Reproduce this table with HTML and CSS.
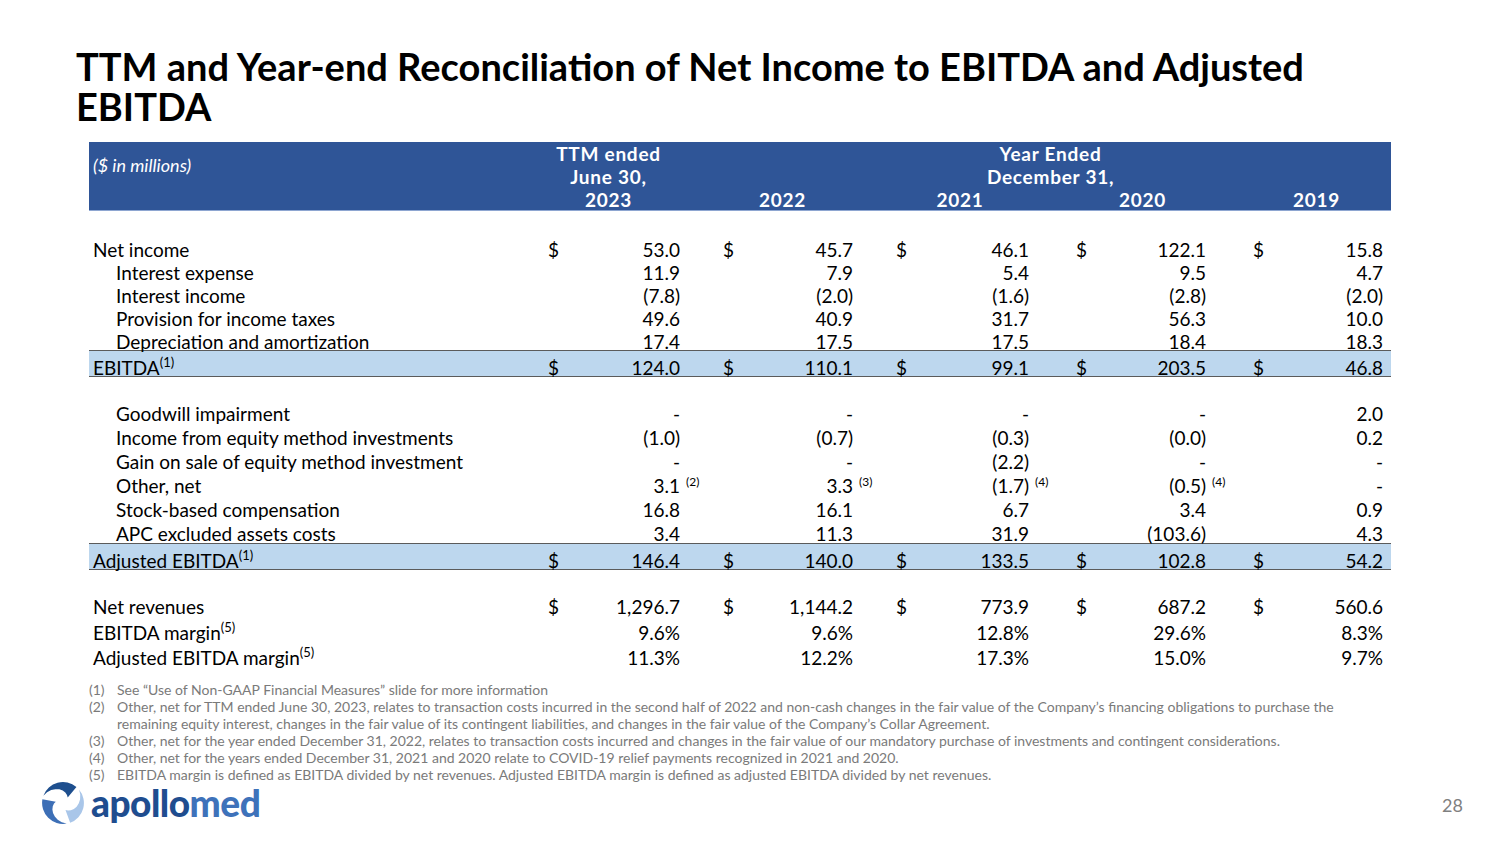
FILE: index.html
```html
<!DOCTYPE html>
<html lang="en">
<head>
<meta charset="utf-8">
<title>TTM and Year-end Reconciliation</title>
<link rel="stylesheet" href="styles.css">
</head>
<body>
<div class="slide">
  <h1 class="title">TTM and Year-end Reconciliation of Net Income to EBITDA and Adjusted EBITDA</h1>

  <div class="table">
    <div class="thead">
      <div class="units">($ in millions)</div>
      <div class="h-ttm">TTM ended<br>June 30,</div>
      <div class="h-ye">Year Ended<br>December 31,</div>
      <div class="yr y1">2023</div>
      <div class="yr y2">2022</div>
      <div class="yr y3">2021</div>
      <div class="yr y4">2020</div>
      <div class="yr y5">2019</div>
    </div>

    <div class="block top-block">
      <div class="row"><div class="lbl">Net income</div>
        <div class="g"><span class="d">$</span><span class="v">53.0</span><span class="n"></span></div>
        <div class="g"><span class="d">$</span><span class="v">45.7</span><span class="n"></span></div>
        <div class="g"><span class="d">$</span><span class="v">46.1</span><span class="n"></span></div>
        <div class="g"><span class="d">$</span><span class="v">122.1</span><span class="n"></span></div>
        <div class="g"><span class="d">$</span><span class="v">15.8</span><span class="n"></span></div>
      </div>
      <div class="row"><div class="lbl ind">Interest expense</div>
        <div class="g"><span class="d"></span><span class="v">11.9</span><span class="n"></span></div>
        <div class="g"><span class="d"></span><span class="v">7.9</span><span class="n"></span></div>
        <div class="g"><span class="d"></span><span class="v">5.4</span><span class="n"></span></div>
        <div class="g"><span class="d"></span><span class="v">9.5</span><span class="n"></span></div>
        <div class="g"><span class="d"></span><span class="v">4.7</span><span class="n"></span></div>
      </div>
      <div class="row"><div class="lbl ind">Interest income</div>
        <div class="g"><span class="d"></span><span class="v">(7.8)</span><span class="n"></span></div>
        <div class="g"><span class="d"></span><span class="v">(2.0)</span><span class="n"></span></div>
        <div class="g"><span class="d"></span><span class="v">(1.6)</span><span class="n"></span></div>
        <div class="g"><span class="d"></span><span class="v">(2.8)</span><span class="n"></span></div>
        <div class="g"><span class="d"></span><span class="v">(2.0)</span><span class="n"></span></div>
      </div>
      <div class="row"><div class="lbl ind">Provision for income taxes</div>
        <div class="g"><span class="d"></span><span class="v">49.6</span><span class="n"></span></div>
        <div class="g"><span class="d"></span><span class="v">40.9</span><span class="n"></span></div>
        <div class="g"><span class="d"></span><span class="v">31.7</span><span class="n"></span></div>
        <div class="g"><span class="d"></span><span class="v">56.3</span><span class="n"></span></div>
        <div class="g"><span class="d"></span><span class="v">10.0</span><span class="n"></span></div>
      </div>
      <div class="row last"><div class="lbl ind">Depreciation and amortization</div>
        <div class="g"><span class="d"></span><span class="v">17.4</span><span class="n"></span></div>
        <div class="g"><span class="d"></span><span class="v">17.5</span><span class="n"></span></div>
        <div class="g"><span class="d"></span><span class="v">17.5</span><span class="n"></span></div>
        <div class="g"><span class="d"></span><span class="v">18.4</span><span class="n"></span></div>
        <div class="g"><span class="d"></span><span class="v">18.3</span><span class="n"></span></div>
      </div>
      <div class="row total"><div class="lbl">EBITDA<sup>(1)</sup></div>
        <div class="g"><span class="d">$</span><span class="v">124.0</span><span class="n"></span></div>
        <div class="g"><span class="d">$</span><span class="v">110.1</span><span class="n"></span></div>
        <div class="g"><span class="d">$</span><span class="v">99.1</span><span class="n"></span></div>
        <div class="g"><span class="d">$</span><span class="v">203.5</span><span class="n"></span></div>
        <div class="g"><span class="d">$</span><span class="v">46.8</span><span class="n"></span></div>
      </div>
    </div>

    <div class="block mid-block">
      <div class="row"><div class="lbl ind">Goodwill impairment</div>
        <div class="g"><span class="d"></span><span class="v">-</span><span class="n"></span></div>
        <div class="g"><span class="d"></span><span class="v">-</span><span class="n"></span></div>
        <div class="g"><span class="d"></span><span class="v">-</span><span class="n"></span></div>
        <div class="g"><span class="d"></span><span class="v">-</span><span class="n"></span></div>
        <div class="g"><span class="d"></span><span class="v">2.0</span><span class="n"></span></div>
      </div>
      <div class="row"><div class="lbl ind">Income from equity method investments</div>
        <div class="g"><span class="d"></span><span class="v">(1.0)</span><span class="n"></span></div>
        <div class="g"><span class="d"></span><span class="v">(0.7)</span><span class="n"></span></div>
        <div class="g"><span class="d"></span><span class="v">(0.3)</span><span class="n"></span></div>
        <div class="g"><span class="d"></span><span class="v">(0.0)</span><span class="n"></span></div>
        <div class="g"><span class="d"></span><span class="v">0.2</span><span class="n"></span></div>
      </div>
      <div class="row"><div class="lbl ind">Gain on sale of equity method investment</div>
        <div class="g"><span class="d"></span><span class="v">-</span><span class="n"></span></div>
        <div class="g"><span class="d"></span><span class="v">-</span><span class="n"></span></div>
        <div class="g"><span class="d"></span><span class="v">(2.2)</span><span class="n"></span></div>
        <div class="g"><span class="d"></span><span class="v">-</span><span class="n"></span></div>
        <div class="g"><span class="d"></span><span class="v">-</span><span class="n"></span></div>
      </div>
      <div class="row"><div class="lbl ind">Other, net</div>
        <div class="g"><span class="d"></span><span class="v">3.1</span><span class="n">(2)</span></div>
        <div class="g"><span class="d"></span><span class="v">3.3</span><span class="n">(3)</span></div>
        <div class="g"><span class="d"></span><span class="v">(1.7)</span><span class="n">(4)</span></div>
        <div class="g"><span class="d"></span><span class="v">(0.5)</span><span class="n">(4)</span></div>
        <div class="g"><span class="d"></span><span class="v">-</span><span class="n"></span></div>
      </div>
      <div class="row"><div class="lbl ind">Stock-based compensation</div>
        <div class="g"><span class="d"></span><span class="v">16.8</span><span class="n"></span></div>
        <div class="g"><span class="d"></span><span class="v">16.1</span><span class="n"></span></div>
        <div class="g"><span class="d"></span><span class="v">6.7</span><span class="n"></span></div>
        <div class="g"><span class="d"></span><span class="v">3.4</span><span class="n"></span></div>
        <div class="g"><span class="d"></span><span class="v">0.9</span><span class="n"></span></div>
      </div>
      <div class="row last"><div class="lbl ind">APC excluded assets costs</div>
        <div class="g"><span class="d"></span><span class="v">3.4</span><span class="n"></span></div>
        <div class="g"><span class="d"></span><span class="v">11.3</span><span class="n"></span></div>
        <div class="g"><span class="d"></span><span class="v">31.9</span><span class="n"></span></div>
        <div class="g"><span class="d"></span><span class="v">(103.6)</span><span class="n"></span></div>
        <div class="g"><span class="d"></span><span class="v">4.3</span><span class="n"></span></div>
      </div>
      <div class="row total"><div class="lbl">Adjusted EBITDA<sup>(1)</sup></div>
        <div class="g"><span class="d">$</span><span class="v">146.4</span><span class="n"></span></div>
        <div class="g"><span class="d">$</span><span class="v">140.0</span><span class="n"></span></div>
        <div class="g"><span class="d">$</span><span class="v">133.5</span><span class="n"></span></div>
        <div class="g"><span class="d">$</span><span class="v">102.8</span><span class="n"></span></div>
        <div class="g"><span class="d">$</span><span class="v">54.2</span><span class="n"></span></div>
      </div>
    </div>

    <div class="block bottom-block">
      <div class="row wide"><div class="lbl">Net revenues</div>
        <div class="g"><span class="d">$</span><span class="v">1,296.7</span><span class="n"></span></div>
        <div class="g"><span class="d">$</span><span class="v">1,144.2</span><span class="n"></span></div>
        <div class="g"><span class="d">$</span><span class="v">773.9</span><span class="n"></span></div>
        <div class="g"><span class="d">$</span><span class="v">687.2</span><span class="n"></span></div>
        <div class="g"><span class="d">$</span><span class="v">560.6</span><span class="n"></span></div>
      </div>
      <div class="row wide"><div class="lbl">EBITDA margin<sup>(5)</sup></div>
        <div class="g"><span class="d"></span><span class="v">9.6%</span><span class="n"></span></div>
        <div class="g"><span class="d"></span><span class="v">9.6%</span><span class="n"></span></div>
        <div class="g"><span class="d"></span><span class="v">12.8%</span><span class="n"></span></div>
        <div class="g"><span class="d"></span><span class="v">29.6%</span><span class="n"></span></div>
        <div class="g"><span class="d"></span><span class="v">8.3%</span><span class="n"></span></div>
      </div>
      <div class="row wide"><div class="lbl">Adjusted EBITDA margin<sup>(5)</sup></div>
        <div class="g"><span class="d"></span><span class="v">11.3%</span><span class="n"></span></div>
        <div class="g"><span class="d"></span><span class="v">12.2%</span><span class="n"></span></div>
        <div class="g"><span class="d"></span><span class="v">17.3%</span><span class="n"></span></div>
        <div class="g"><span class="d"></span><span class="v">15.0%</span><span class="n"></span></div>
        <div class="g"><span class="d"></span><span class="v">9.7%</span><span class="n"></span></div>
      </div>
    </div>
  </div>

  <ol class="notes">
    <li><span class="num">(1)</span><span class="txt">See “Use of Non-GAAP Financial Measures” slide for more information</span></li>
    <li><span class="num">(2)</span><span class="txt">Other, net for TTM ended June 30, 2023, relates to transaction costs incurred in the second half of 2022 and non-cash changes in the fair value of the Company’s financing obligations to purchase the remaining equity interest, changes in the fair value of its contingent liabilities, and changes in the fair value of the Company’s Collar Agreement.</span></li>
    <li><span class="num">(3)</span><span class="txt">Other, net for the year ended December 31, 2022, relates to transaction costs incurred and changes in the fair value of our mandatory purchase of investments and contingent considerations.</span></li>
    <li><span class="num">(4)</span><span class="txt">Other, net for the years ended December 31, 2021 and 2020 relate to COVID-19 relief payments recognized in 2021 and 2020.</span></li>
    <li><span class="num">(5)</span><span class="txt">EBITDA margin is defined as EBITDA divided by net revenues. Adjusted EBITDA margin is defined as adjusted EBITDA divided by net revenues.</span></li>
  </ol>

  <div class="footer">
    <div class="logo">
      <svg class="logo-mark" width="46" height="46" viewBox="0 0 44 44" aria-hidden="true">
        <g transform="translate(22 22)">
          <path fill="#3d6fb6" transform="rotate(-120)" d="M-18.79 -6.84 A20 20 0 0 1 12.86 -15.32 L4.50 -5.36 L3.81 -7.74 L2.22 -10.01 L-0.26 -11.87 L-3.49 -13.04 L-7.28 -13.26 L-11.32 -12.35 L-15.28 -10.21 Z"/>
          <path fill="#a9c6e9" transform="rotate(120)" d="M-18.79 -6.84 A20 20 0 0 1 12.86 -15.32 L4.50 -5.36 L3.81 -7.74 L2.22 -10.01 L-0.26 -11.87 L-3.49 -13.04 L-7.28 -13.26 L-11.32 -12.35 L-15.28 -10.21 Z"/>
          <path fill="#1e4f8e" d="M-18.79 -6.84 A20 20 0 0 1 12.86 -15.32 L4.50 -5.36 L3.81 -7.74 L2.22 -10.01 L-0.26 -11.87 L-3.49 -13.04 L-7.28 -13.26 L-11.32 -12.35 L-15.28 -10.21 Z"/>
        </g>
      </svg>
      <span class="logo-text"><span class="apollo">apollo</span><span class="med">med</span></span>
    </div>
    <div class="page">28</div>
  </div>
</div>
</body>
</html>
```

FILE: styles.css
```css
* { box-sizing: border-box; }

html, body {
  margin: 0;
  padding: 0;
  background: #ffffff;
}

body {
  font-family: Lato, "Liberation Sans", sans-serif;
  color: #000000;
}

.slide {
  width: 1500px;
  height: 844px;
  padding: 46px 0 0 0;
  overflow: hidden;
}

.title {
  margin: 0 0 16px 76px;
  width: 1280px;
  font-size: 38px;
  line-height: 40px;
  font-weight: 700;
  color: #000;
}

.table {
  margin-left: 89px;
  width: 1302px;
}

/* header */
.thead {
  display: grid;
  grid-template-columns: 456px 175px 173px 180px 177px 141px;
  grid-template-rows: 23px 23px 22px;
  background: #2f5597;
  color: #fff;
  font-size: 19px;
  font-weight: 700;
  letter-spacing: 0.75px;
  line-height: 23px;
  border-bottom: 1px solid #8ea6d1;
}

.units {
  grid-column: 1;
  grid-row: 1 / 3;
  align-self: center;
  padding-left: 4px;
  font-style: italic;
  font-weight: 400;
  font-size: 18px;
  letter-spacing: 0;
}

.h-ttm {
  grid-column: 2;
  grid-row: 1 / 3;
  text-align: center;
  padding-right: 48px;
}

.h-ye {
  grid-column: 3 / 7;
  grid-row: 1 / 3;
  text-align: center;
  padding-right: 10px;
}

.yr {
  grid-row: 3;
  text-align: center;
}
.y1 { grid-column: 2; padding-right: 48px; }
.y2 { grid-column: 3; padding-right: 48px; }
.y3 { grid-column: 4; padding-right: 46px; }
.y4 { grid-column: 5; padding-right: 38px; }
.y5 { grid-column: 6; padding-right: 8px; }

/* body blocks */
.top-block { padding-top: 27px; }
.mid-block { padding-top: 25px; }
.bottom-block { padding-top: 24px; }

.row {
  display: grid;
  grid-template-columns: 456px 175px 173px 180px 177px 141px;
  height: 23px;
  font-size: 19px;
  line-height: 23px;
}

.mid-block .row { height: 24px; line-height: 24px; }
.mid-block .row.last { height: 21px; }
.top-block .row.last { height: 20px; }

.row.wide { height: 25.5px; line-height: 25px; }

.row.total,
.mid-block .row.total {
  height: 27px;
  background: #bdd7ee;
  border-top: 1px solid #5b5b5b;
  border-bottom: 1px solid #5b5b5b;
  padding-top: 5px;
  line-height: 23px;
}

.lbl {
  padding-left: 4px;
  white-space: nowrap;
}
.lbl.ind { padding-left: 27px; }

.g {
  display: grid;
  grid-template-columns: 20px 1fr var(--n, 40px);
}
.row > .g:nth-child(2) { --n: 40px; }
.row > .g:nth-child(3) { --n: 40px; }
.row > .g:nth-child(4) { --n: 44px; }
.row > .g:nth-child(5) { --n: 44px; }
.row > .g:nth-child(6) { --n: 8px; }

.d { padding-left: 3px; }
.v { text-align: right; white-space: nowrap; }
.n {
  font-size: 12px;
  line-height: 12px;
  padding-left: 6px;
  padding-top: 2px;
  white-space: nowrap;
}

sup {
  font-size: 13px;
  line-height: 0;
  vertical-align: 8px;
}

/* footnotes */
.notes {
  list-style: none;
  margin: 10px 0 0 89px;
  padding: 0;
  font-size: 14px;
  line-height: 17px;
  color: #7a7a7a;
}
.notes li {
  display: flex;
}
.notes .num {
  width: 28px;
  flex: none;
}
.notes .txt {
  width: 1245px;
}

/* footer */
.footer {
  display: flex;
  justify-content: space-between;
  align-items: center;
  padding: 0 37px 0 40px;
  margin-top: -3px;
}

.logo {
  display: flex;
  align-items: center;
  gap: 5px;
}
.logo-mark { display: block; }
.logo-text {
  font-size: 37px;
  font-weight: 900;
  letter-spacing: -0.5px;
  line-height: 42px;
}
.apollo { color: #1f4d8f; }
.med { color: #3e72ba; }

.page {
  font-size: 18px;
  color: #808080;
  padding-top: 4px;
}
```
